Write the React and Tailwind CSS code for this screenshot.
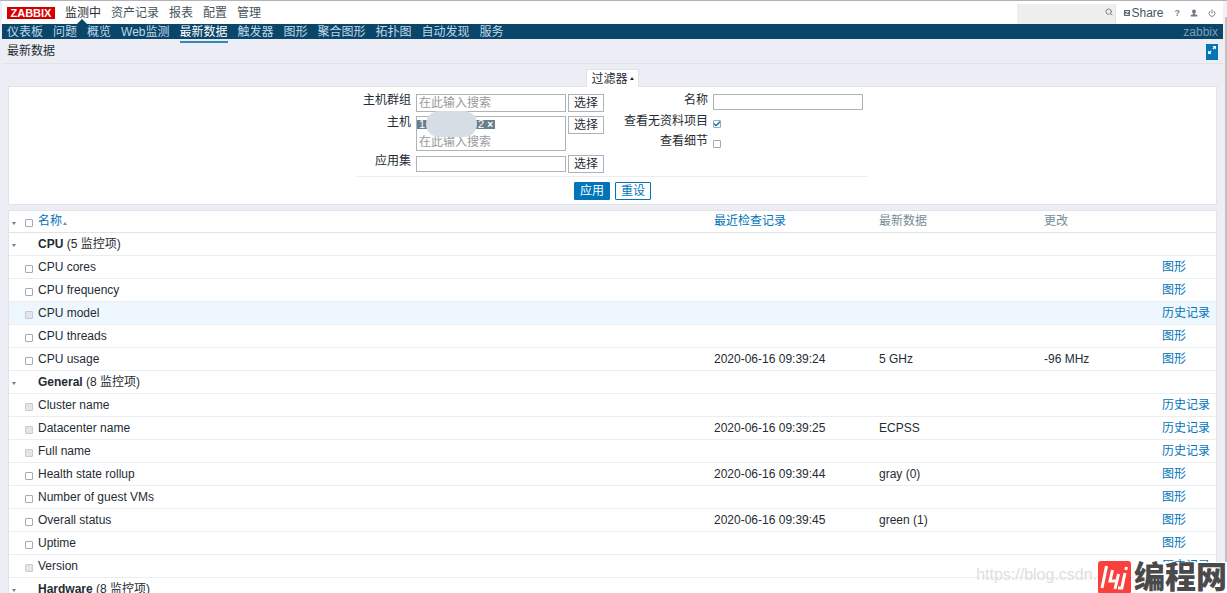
import React from "react";
import { Check, Search, Power } from "lucide-react";

const mainMenu = ["监测中", "资产记录", "报表", "配置", "管理"];
const subMenu = ["仪表板", "问题", "概览", "Web监测", "最新数据", "触发器", "图形", "聚合图形", "拓扑图", "自动发现", "服务"];

const groups = [
  {
    name: "CPU",
    count: 5,
    items: [
      { name: "CPU cores", link: "图形" },
      { name: "CPU frequency", link: "图形" },
      { name: "CPU model", link: "历史记录", hover: true },
      { name: "CPU threads", link: "图形" },
      { name: "CPU usage", time: "2020-06-16 09:39:24", value: "5 GHz", change: "-96 MHz", link: "图形" },
    ],
  },
  {
    name: "General",
    count: 8,
    items: [
      { name: "Cluster name", link: "历史记录" },
      { name: "Datacenter name", time: "2020-06-16 09:39:25", value: "ECPSS", link: "历史记录" },
      { name: "Full name", link: "历史记录" },
      { name: "Health state rollup", time: "2020-06-16 09:39:44", value: "gray (0)", link: "图形" },
      { name: "Number of guest VMs", link: "图形" },
      { name: "Overall status", time: "2020-06-16 09:39:45", value: "green (1)", link: "图形" },
      { name: "Uptime", link: "图形" },
      { name: "Version", link: "历史记录" },
    ],
  },
  { name: "Hardware", count: 8, items: [] },
];

function Box({ id, label, checked, disabled }) {
  return (
    <span className="relative block size-2">
      <input
        id={id}
        type="checkbox"
        aria-label={label}
        defaultChecked={checked}
        disabled={disabled}
        className="peer block size-2 appearance-none rounded-[1px] border border-[#a3abb1] bg-white disabled:border-[#c8cccf] disabled:bg-[#e3e5e7]"
      />
      <Check
        className="pointer-events-none absolute inset-0 hidden size-2 text-[#0275b8] peer-checked:block"
        strokeWidth={4}
      />
    </span>
  );
}

function Toggle({ label }) {
  return (
    <button type="button" aria-label={label} className="block pt-1 pl-[3px]">
      <svg width="4" height="3" viewBox="0 0 4 3" className="fill-[#6c7f8c]">
        <path d="M0 0h4L2 3z" />
      </svg>
    </button>
  );
}

function SelectButton() {
  return (
    <button type="button" className="h-[18px] w-9 border border-[#acb4bb] bg-white text-center leading-4">
      选择
    </button>
  );
}

function Header() {
  return (
    <header>
      <div className="flex h-[23px] items-center justify-between bg-white">
        <nav className="flex h-full items-center pl-[5px]">
          <a href="#home" className="mr-[10px] flex h-3 w-12 items-center justify-center bg-[#d40000] text-[11px] font-bold text-white">
            ZABBIX
          </a>
          <div className="flex h-full gap-[10px]">
            {mainMenu.map((item, i) => (
              <a
                key={item}
                href="#menu"
                className={
                  i === 0
                    ? "relative flex items-center text-[#1f2c33]"
                    : "flex items-center text-[#47545c]"
                }
              >
                {item}
                {i === 0 && (
                  <svg width="10" height="5" viewBox="0 0 10 5" className="absolute bottom-0 left-3 fill-[#0a466a]">
                    <path d="M5 0l5 5H0z" />
                  </svg>
                )}
              </a>
            ))}
          </div>
        </nav>
        <div className="flex h-full items-center pr-[7px]">
          <form className="mt-[3px] flex h-5 w-[99px] items-center border-r border-[#dfe4e7] bg-[#eeeeee] pr-[2px]">
            <input type="text" aria-label="搜索" className="min-w-0 flex-1 bg-transparent outline-none" />
            <button type="submit" aria-label="搜索" className="-mt-1">
              <Search className="size-2 text-[#77838b]" strokeWidth={3} />
            </button>
          </form>
          <a href="#share" className="ml-2 flex items-center text-[#47545c]">
            <svg width="6" height="6" viewBox="0 0 6 6" className="shrink-0">
              <rect width="6" height="6" fill="#5c6c79" />
              <path d="M1.200 1.500h3.400L1.400 4.500h3.400" fill="none" stroke="#fff" strokeWidth="0.800" />
            </svg>
            <span className="ml-px">Share</span>
          </a>
          <a href="#help" className="ml-[11px] text-[9px] font-bold text-[#77838b]">?</a>
          <a href="#profile" aria-label="用户" className="ml-[10px]">
            <svg width="8" height="8" viewBox="0 0 8 8" className="fill-[#6c7a84]">
              <circle cx="4" cy="2.500" r="2" />
              <path d="M3.200 4h1.600v1.300L7.300 6v1.500H.7V6l2.500-.7z" />
            </svg>
          </a>
          <a href="#logout" aria-label="退出" className="ml-[10px]">
            <Power className="size-2 text-[#7b868e]" strokeWidth={3} />
          </a>
        </div>
      </div>
      <div className="flex h-[15px] items-center justify-between bg-[#0a466a] pr-[5px] pl-[5px]">
        <nav className="flex h-full gap-[10px]">
          {subMenu.map((item) => (
            <a
              key={item}
              href="#page"
              className={
                item === "最新数据"
                  ? "relative flex items-center text-white"
                  : "flex items-center text-[#c0d8e6]"
              }
            >
              {item}
              {item === "最新数据" && <span className="absolute top-[17px] right-0 left-0 h-[2px] bg-[#3387b5]" />}
            </a>
          ))}
        </nav>
        <span className="text-[#7f9fb4]">zabbix</span>
      </div>
    </header>
  );
}

function Filter() {
  return (
    <section className="px-[6px] pt-[5px]">
      <div className="flex justify-center">
        <button type="button" className="relative -mb-px flex h-[18px] items-center gap-[2px] border border-b-0 border-[#dfe4e7] bg-white px-1">
          过滤器
          <svg width="4" height="3" viewBox="0 0 4 3" className="fill-[#1f2c33]">
            <path d="M0 3h4L2 0z" />
          </svg>
        </button>
      </div>
      <form className="flex flex-col items-center border border-[#dfe4e7] bg-white pt-[7px] pb-1">
        <div className="flex w-[511px] justify-between border-b border-[#ebeef0] pr-[5px] pb-[3px]">
          <div className="flex flex-col gap-1">
            <div className="flex items-start">
              <label htmlFor="groups" className="w-[54px] text-right leading-3">主机群组</label>
              <input id="groups" type="text" placeholder="在此输入搜索" className="mr-[2px] ml-[5px] h-[18px] w-[150px] border border-[#acb4bb] px-[2px] placeholder:text-[#9a9a9a]" />
              <SelectButton />
            </div>
            <div className="flex items-start">
              <label htmlFor="hosts" className="w-[54px] text-right leading-3">主机</label>
              <div className="mr-[2px] ml-[5px] flex h-[35px] w-[150px] flex-col border border-[#acb4bb]">
                <span className="relative mt-[3px] flex h-[9px] w-[78px] items-center justify-between bg-[#6a7f8c] px-[2px] text-[11px] leading-none text-white">
                  <span>1</span>
                  <span className="flex items-center gap-[3px]">
                    2
                    <button type="button" aria-label="移除" className="text-[10px] leading-none font-bold">×</button>
                  </span>
                  <span className="absolute -top-[9px] left-[9px] h-[26px] w-[51px] rounded-[13px] bg-[#d4dee4]" />
                </span>
                <input id="hosts" type="text" placeholder="在此输入搜索" className="mt-[5px] h-4 px-[2px] outline-none placeholder:text-[#9a9a9a]" />
              </div>
              <SelectButton />
            </div>
            <div className="flex items-start">
              <label htmlFor="application" className="w-[54px] text-right leading-3">应用集</label>
              <input id="application" type="text" className="mt-px mr-[2px] ml-[5px] h-4 w-[150px] border border-[#acb4bb] px-[2px]" />
              <SelectButton />
            </div>
          </div>
          <div className="flex flex-col">
            <div className="flex items-start">
              <label htmlFor="name" className="w-[85px] text-right leading-3">名称</label>
              <input id="name" type="text" className="ml-[5px] h-4 w-[150px] border border-[#acb4bb] px-[2px]" />
            </div>
            <div className="mt-1 flex h-5 items-center">
              <label htmlFor="nodata" className="mr-[5px] w-[85px] pb-[6px] text-right whitespace-nowrap">查看无资料项目</label>
              <Box id="nodata" label="查看无资料项目" checked />
            </div>
            <div className="flex h-5 items-center">
              <label htmlFor="details" className="mr-[5px] w-[85px] pb-[6px] text-right">查看细节</label>
              <Box id="details" label="查看细节" />
            </div>
          </div>
        </div>
        <div className="mt-[5px] flex gap-[5px]">
          <button type="submit" className="h-[18px] w-9 rounded-[1px] border border-[#0275b8] bg-[#0275b8] leading-4 text-white">应用</button>
          <button type="reset" className="h-[18px] w-9 rounded-[1px] border border-[#0275b8] bg-white leading-4 text-[#0275b8]">重设</button>
        </div>
      </form>
    </section>
  );
}

function DataTable() {
  return (
    <section className="mx-[6px] mt-[5px] border border-[#dfe4e7] bg-white">
      <table className="w-full table-fixed border-collapse text-left">
        <colgroup>
          <col className="w-4" />
          <col className="w-[13px]" />
          <col />
          <col className="w-[165px]" />
          <col className="w-[165px]" />
          <col className="w-[118px]" />
          <col className="w-[54px]" />
        </colgroup>
        <thead>
          <tr className="h-[21px] border-b border-[#dfe4e7] text-[#768d99]">
            <th><Toggle label="全部展开" /></th>
            <th className="pt-1"><Box label="全选" /></th>
            <th className="font-normal">
              <a href="#sort-name" className="flex items-center gap-px text-[#0275b8]">
                名称
                <svg width="4" height="3" viewBox="0 0 4 3" className="mt-1 fill-[#768d99]">
                  <path d="M0 3h4L2 0z" />
                </svg>
              </a>
            </th>
            <th className="font-normal"><a href="#sort-time" className="text-[#0275b8]">最近检查记录</a></th>
            <th className="font-normal">最新数据</th>
            <th className="font-normal">更改</th>
            <th />
          </tr>
        </thead>
        <tbody>
          {groups.map((group) => (
            <React.Fragment key={group.name}>
              <tr className="h-[23px] border-b border-[#ebeef0]">
                <td><Toggle label={group.name} /></td>
                <td />
                <td colSpan={5}><b>{group.name}</b> ({group.count} 监控项)</td>
              </tr>
              {group.items.map((item) => (
                <tr
                  key={item.name}
                  className={item.hover ? "h-[23px] border-b border-[#ebeef0] bg-[#eff7fe]" : "h-[23px] border-b border-[#ebeef0]"}
                >
                  <td />
                  <td className="pt-1"><Box label={item.name} disabled={item.link === "历史记录"} /></td>
                  <td>{item.name}</td>
                  <td>{item.time}</td>
                  <td>{item.value}</td>
                  <td>{item.change}</td>
                  <td className="whitespace-nowrap"><a href="#history" className="text-[#0275b8]">{item.link}</a></td>
                </tr>
              ))}
            </React.Fragment>
          ))}
        </tbody>
      </table>
    </section>
  );
}

function Watermark() {
  return (
    <div className="pointer-events-none absolute right-0 bottom-0 flex h-8 items-center">
      <span className="-mr-2 pb-1 text-[16px] text-[#dddfe1]">https://blog.csdn.n</span>
      <svg width="34" height="33" viewBox="0 0 34 33" className="relative shrink-0">
        <rect width="33" height="33" rx="3" fill="#f9403c" />
        <g fill="none" stroke="#fff" strokeWidth="3">
          <path d="M8.500 5L4 27" />
          <path d="M14.500 9l-2.500 11h8M20.500 13l-3.500 15" />
          <path d="M27 12l-3.200 15h-3.800M28.500 6l-.7 3" />
        </g>
      </svg>
      <span className="ml-[2px] flex h-[31px] items-center self-end bg-white text-[31px] leading-none font-black text-[#4a4a4a]">编程网</span>
    </div>
  );
}

export default function App() {
  return (
    <div className="relative flex h-screen overflow-hidden border-t border-[#b4b4b8] bg-[#edeef5] pl-[2px] font-['Liberation_Sans','Noto_Sans_CJK_SC',sans-serif] text-[12px] leading-4 text-[#1f2c33]">
      <div className="min-w-0 flex-1">
        <Header />
        <div className="flex h-[25px] items-start justify-between border-b border-[#dfe4e7] pr-[5px] pl-[5px]">
          <h1 className="pt-1">最新数据</h1>
          <button type="button" aria-label="全屏" className="mt-[5px] flex h-4 w-3 justify-center bg-[#0275b8] pt-[2px]">
            <svg width="8" height="8" viewBox="0 0 8 8" className="fill-white">
              <path d="M4.500 0H8v3.500L6.700 2.300 5.500 3.500l-1-1 1.200-1.200zM0 4.500l1.300 1.200 1.200-1.200 1 1-1.200 1.200L3.500 8H0z" />
            </svg>
          </button>
        </div>
        <main>
          <Filter />
          <DataTable />
        </main>
      </div>
      <div className="flex w-1 shrink-0 flex-col items-end bg-[#f0f0f4] pt-4">
        <div className="w-[2px] flex-1 bg-[#c1c1c4]" />
      </div>
      <Watermark />
    </div>
  );
}
